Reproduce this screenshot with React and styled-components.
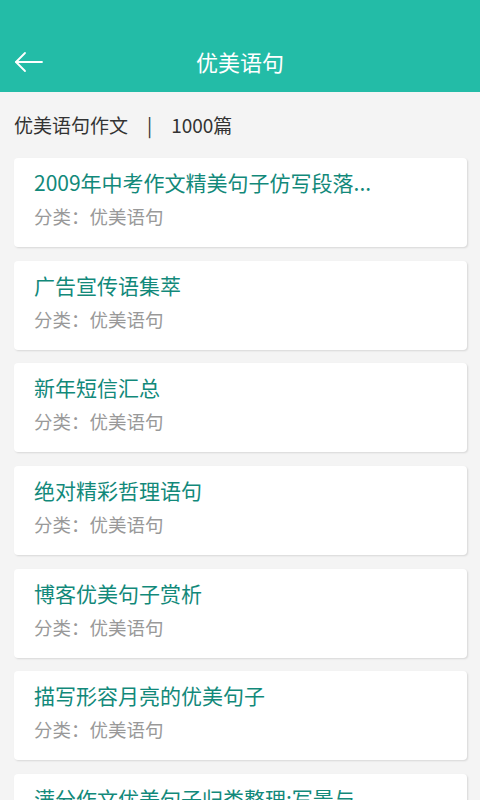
import React from 'react';
import styled, { createGlobalStyle } from 'styled-components';

const GlobalStyle = createGlobalStyle`
  html, body {
    margin: 0;
    padding: 0;
    background: #f4f4f4;
  }
  body {
    font-family: "Noto Sans CJK SC", Roboto, "Noto Sans", sans-serif;
    overflow: hidden;
  }
`;

const Page = styled.div`
  width: 480px;
  height: 800px;
  background: #f4f4f4;
  overflow: hidden;
`;

const Header = styled.header`
  height: 92px;
  background: #23bca7;
  box-sizing: border-box;
  padding-top: 32px;
  display: flex;
  align-items: center;
  position: relative;
`;

const BackButton = styled.div`
  width: 60px;
  height: 60px;
  display: flex;
  align-items: center;
  padding-left: 14px;
  box-sizing: border-box;
`;

const HeaderTitle = styled.h1`
  position: absolute;
  left: 0;
  right: 0;
  top: 31px;
  height: 60px;
  margin: 0;
  display: flex;
  align-items: center;
  justify-content: center;
  color: #fff;
  font-size: 22px;
  font-weight: normal;
  pointer-events: none;
`;

const Summary = styled.div`
  display: flex;
  align-items: center;
  height: 66px;
  padding: 0 14px 2px;
  box-sizing: border-box;
  color: #333;
  font-size: 19px;
`;

const Divider = styled.span`
  margin: 0 19px;
`;

const List = styled.div`
  display: flex;
  flex-direction: column;
  gap: 13.7px;
  padding: 0 13px 0 14px;
`;

const Card = styled.div`
  background: #fff;
  border-radius: 4px;
  height: 89px;
  padding: 10px 20px 0;
  box-sizing: border-box;
  display: flex;
  flex-direction: column;
  gap: 8px;
  box-shadow: 1px 1px 2px rgba(0, 0, 0, 0.12);
`;

const CardTitle = styled.div`
  color: #12897a;
  font-size: 21px;
  line-height: 28px;
  white-space: nowrap;
`;

const CardMeta = styled.div`
  color: #999;
  font-size: 18.5px;
  line-height: 24px;
`;

const items = [
  '2009年中考作文精美句子仿写段落...',
  '广告宣传语集萃',
  '新年短信汇总',
  '绝对精彩哲理语句',
  '博客优美句子赏析',
  '描写形容月亮的优美句子',
  '满分作文优美句子归类整理:写景与',
];

export default function App() {
  return (
    <Page>
      <GlobalStyle />
      <Header>
        <BackButton>
          <svg width="30" height="22" viewBox="0 0 30 22" fill="none" stroke="#fff" strokeWidth="1.8" strokeLinecap="round">
            <path d="M2 11 H28" />
            <path d="M11 2 L2 11 L11 20" strokeLinejoin="round" />
          </svg>
        </BackButton>
        <HeaderTitle>优美语句</HeaderTitle>
      </Header>
      <Summary>
        优美语句作文<Divider>|</Divider>1000篇
      </Summary>
      <List>
        {items.map((t) => (
          <Card key={t}>
            <CardTitle>{t}</CardTitle>
            <CardMeta>分类：优美语句</CardMeta>
          </Card>
        ))}
      </List>
    </Page>
  );
}
